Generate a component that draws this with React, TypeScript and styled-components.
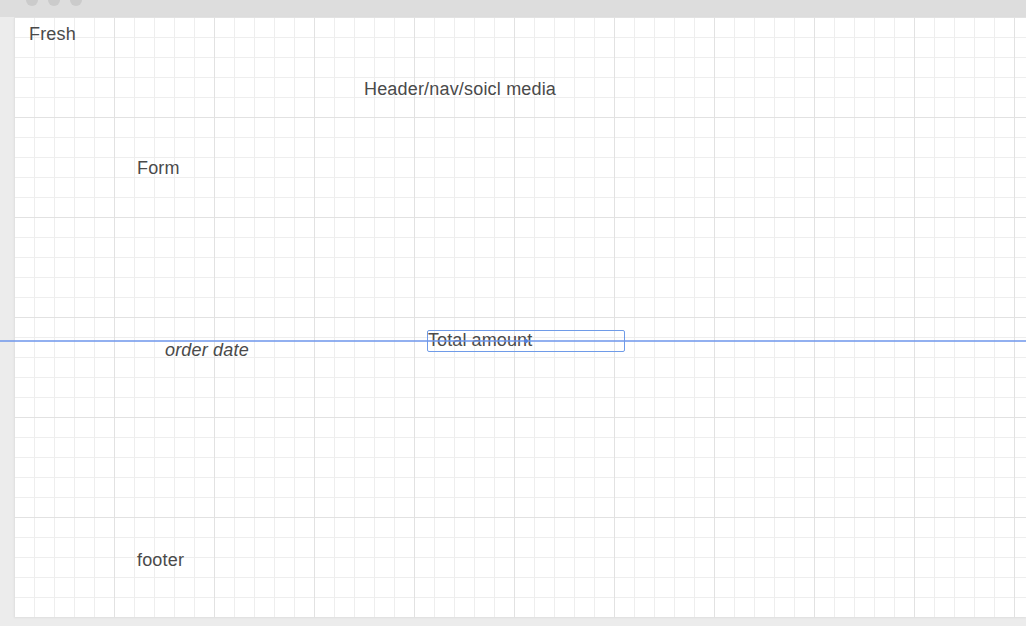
import React from "react";
import styled, { createGlobalStyle } from "styled-components";

const Global = createGlobalStyle`
  html, body { margin: 0; padding: 0; background: #ececec; overflow: hidden; }
  body { font-family: "Liberation Sans", Arial, sans-serif; }
`;

const Page = styled.div`
  width: 1026px;
  height: 626px;
  display: flex;
  flex-direction: column;
  background: #ececec;
  position: relative;
  overflow: hidden;
`;

const TopBar = styled.div`
  height: 17px;
  flex: none;
  background: #dddddd;
  display: flex;
  align-items: center;
  gap: 10px;
  padding-left: 26px;
  overflow: hidden;
`;

const Dot = styled.span`
  width: 12px;
  height: 12px;
  border-radius: 50%;
  background: #cbcbcb;
  margin-top: -17px;
`;

const Body = styled.div`
  display: flex;
  flex: none;
`;

const Gutter = styled.div`
  width: 14px;
  flex: none;
`;

const Canvas = styled.div`
  position: relative;
  width: 1012px;
  height: 600px;
  background-color: #ffffff;
  background-image:
    linear-gradient(to right, #e2e2e2 1px, transparent 1px),
    linear-gradient(to bottom, #e2e2e2 1px, transparent 1px),
    linear-gradient(to right, #eeeeee 1px, transparent 1px),
    linear-gradient(to bottom, #eeeeee 1px, transparent 1px);
  background-size: 100px 100px, 100px 100px, 20px 20px, 20px 20px;
  box-shadow: 0 1px 2px rgba(0, 0, 0, 0.06);
`;

const Label = styled.div<{ $x: number; $y: number; $italic?: boolean }>`
  position: absolute;
  left: ${(p) => p.$x}px;
  top: ${(p) => p.$y}px;
  font-size: 18px;
  line-height: 21px;
  letter-spacing: 0.18px;
  color: #4a4a4a;
  white-space: nowrap;
  font-style: ${(p) => (p.$italic ? "italic" : "normal")};
`;

const FieldBox = styled.div`
  position: absolute;
  left: 413px;
  top: 313px;
  width: 196px;
  height: 20px;
  border: 1px solid #6f9be8;
  border-radius: 2px;
  font-size: 18px;
  line-height: 19px;
  letter-spacing: 0.1px;
  color: #4a4a4a;
  white-space: nowrap;
`;

const GuideLine = styled.div`
  position: absolute;
  left: 0;
  top: 340px;
  width: 1026px;
  height: 2px;
  background: rgba(110, 150, 235, 0.75);
`;

const Handle = styled.div`
  position: absolute;
  left: 524px;
  top: 339px;
  width: 4px;
  height: 4px;
  border-radius: 50%;
  background: #4f80e0;
`;

export default function App() {
  return (
    <>
      <Global />
      <Page>
        <TopBar>
          <Dot />
          <Dot />
          <Dot />
        </TopBar>
        <Body>
          <Gutter />
          <Canvas>
            <Label $x={15} $y={7}>Fresh</Label>
            <Label $x={350} $y={62}>Header/nav/soicl media</Label>
            <Label $x={123} $y={141}>Form</Label>
            <Label $x={151} $y={323} $italic>order date</Label>
            <FieldBox>Total amount</FieldBox>
            <Label $x={123} $y={533}>footer</Label>
          </Canvas>
        </Body>
        <GuideLine />
        <Handle />
      </Page>
    </>
  );
}
